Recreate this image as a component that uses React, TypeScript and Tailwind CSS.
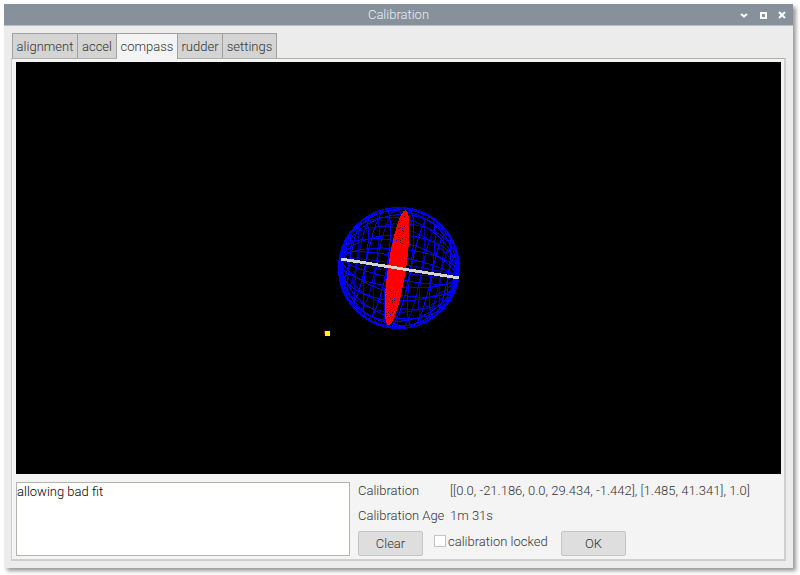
import { useState } from "react";

const TABS = ["alignment", "accel", "compass", "rudder", "settings"];

type Vec = [number, number, number];

const RADIUS = 60;
const TILT = 0.19;
const ROLL = 0.165;

// Rotates a point whose x axis is the poles' axis, then drops the depth.
function project([x, y, z]: Vec): string {
  const px = x * Math.cos(TILT) + z * Math.sin(TILT);
  const sx = px * Math.cos(ROLL) - y * Math.sin(ROLL);
  const sy = px * Math.sin(ROLL) + y * Math.cos(ROLL);
  return `${(sx * RADIUS).toFixed(1)},${(sy * RADIUS).toFixed(1)}`;
}

const range = (n: number) => Array.from({ length: n }, (_, i) => i);

const parallels = range(15).map((i) => {
  const a = ((i + 1) * Math.PI) / 16;
  return range(49)
    .map((k) => {
      const b = (k * Math.PI) / 24;
      return project([Math.cos(a), Math.sin(a) * Math.cos(b), Math.sin(a) * Math.sin(b)]);
    })
    .join(" ");
});

const meridians = range(24).map((i) => {
  const b = (i * Math.PI) / 12 + 0.07;
  return range(25)
    .map((k) => {
      const a = (k * Math.PI) / 24;
      return project([Math.cos(a), Math.sin(a) * Math.cos(b), Math.sin(a) * Math.sin(b)]);
    })
    .join(" ");
});

// Specks of the wire mesh that show through the two ends of the disc.
const specks = range(60).map((i) => {
  const end = i % 2 ? 1 : -1;
  const y = end * (22 + ((i * 17) % 31));
  const x = -7 + ((i * 7) % 8);
  return { x, y };
});

function Plot() {
  return (
    <svg
      className="block h-full w-full"
      viewBox="-383 -206 765 412"
      preserveAspectRatio="xMidYMid slice"
      role="img"
      aria-label="Compass fit"
      shapeRendering="crispEdges"
    >
      <g fill="none" stroke="#0000ff" strokeWidth="1">
        {parallels.map((p, i) => (
          <polyline key={`p${i}`} points={p} strokeOpacity={i % 2 ? 1 : 0.7} />
        ))}
        {meridians.map((p, i) => (
          <polyline key={`m${i}`} points={p} strokeOpacity={i % 3 ? 0.95 : 0.65} />
        ))}
        <circle r="60.5" strokeOpacity="0.85" />
        <path d="M-59-12Q-64 10-51 32M-58-10Q-61 8-51 28M-57-9Q-58 8-49 30M-59-8Q-55-29-41-44M-60-5Q-57-28-43-43" />
      </g>
      <g transform="rotate(8.5)">
        <ellipse cx="-2" cy="0" rx="9" ry="58" fill="#ff0000" />
        {specks.map((s, i) => (
          <rect key={i} x={s.x} y={s.y} width="1" height="1" fill={i % 3 ? "#500000" : "#2000e8"} />
        ))}
      </g>
      <path d="M-58-9L60 10" stroke="#d3d3d3" strokeWidth="3" />
      <rect x="-75" y="63" width="1" height="3" fill="#a00020" />
      <rect x="-74" y="63" width="5" height="5" fill="#ffff00" />
    </svg>
  );
}

export default function App() {
  const [tab, setTab] = useState("compass");
  return (
    <div className="min-h-screen bg-white pt-1 pr-[7px] pb-[7px] pl-1 font-['Roboto','Liberation_Sans',sans-serif] text-[13px] leading-[17px] font-light text-[#333]">
      <main className="flex min-h-[564px] flex-col bg-[#ececec] shadow-[3px_3px_4px_rgba(0,0,0,0.4)]">
        <header className="flex h-[22px] items-center border-b border-[#b8bec4] bg-[#87919b] text-[#eceef0]">
          <span className="w-16" />
          <h1 className="flex-1 text-center">Calibration</h1>
          <div className="flex w-16 justify-end gap-[7px] pr-[5px]">
            <button aria-label="Minimize" className="flex h-4 w-3 items-center justify-center">
              <svg width="8" height="8" viewBox="0 0 8 8" fill="none" stroke="#fff" strokeWidth="2">
                <path d="M1 3L4 5.5L7 3" />
              </svg>
            </button>
            <button aria-label="Maximize" className="flex h-4 w-3 items-center justify-center">
              <svg width="8" height="8" viewBox="0 0 8 8" fill="none" stroke="#fff" strokeWidth="2">
                <path d="M2 2H7V7H2Z" />
              </svg>
            </button>
            <button aria-label="Close" className="flex h-4 w-3 items-center justify-center">
              <svg width="8" height="8" viewBox="0 0 8 8" fill="none" stroke="#fff" strokeWidth="2">
                <path d="M1 1L7 7M7 1L1 7" />
              </svg>
            </button>
          </div>
        </header>

        <div className="flex flex-1 flex-col px-[7px] pt-[7px] pb-[7px]">
          <div role="tablist" className="grid grid-cols-[66px_39px_61px_45px_54px] pl-px">
            {TABS.map((t) => (
              <button
                key={t}
                role="tab"
                aria-selected={t === tab}
                onClick={() => setTab(t)}
                className={
                  t === tab
                    ? "z-10 -mb-px h-[26px] border-t border-r border-[#a0a0a0] bg-[#f4f4f4] pb-px whitespace-nowrap"
                    : "h-[25px] border-t border-r border-[#a0a0a0] bg-[#d4d4d4] whitespace-nowrap first:border-l"
                }
              >
                {t}
              </button>
            ))}
          </div>

          <section className="flex flex-1 flex-col gap-2 border border-t-[#b0b0a8] border-r-2 border-b-2 border-[#cfcfcf] bg-[#f4f4f4] py-[3px] pr-[3px] pl-1">
            <div className="h-[412px] bg-black">
              <Plot />
            </div>
            <div className="flex flex-1 gap-2">
              <textarea
                aria-label="Messages"
                defaultValue="allowing bad fit"
                className="h-[74px] w-[334px] shrink-0 resize-none border border-[#b4b4ac] bg-white text-black outline-none"
              />
              <div className="flex flex-1 flex-col gap-[7px]">
                <dl className="grid grid-cols-[84px_1fr] gap-x-2 gap-y-2 whitespace-nowrap">
                  <dt>Calibration</dt>
                  <dd>[[0.0, -21.186, 0.0, 29.434, -1.442], [1.485, 41.341], 1.0]</dd>
                  <dt>Calibration Age</dt>
                  <dd>1m 31s</dd>
                </dl>
                <div className="flex gap-[11px]">
                  <button className="h-[25px] w-[65px] rounded-xs border border-[#c4c4c4] bg-[#dedede]">Clear</button>
                  <label className="flex h-5 w-[116px] items-center gap-0.5 whitespace-nowrap">
                    <input type="checkbox" className="size-3 shrink-0 appearance-none border border-[#c4c4c4] bg-white checked:bg-[#87919b]" />
                    calibration locked
                  </label>
                  <button className="h-[25px] w-[65px] rounded-xs border border-[#c4c4c4] bg-[#dedede]">OK</button>
                </div>
              </div>
            </div>
          </section>
        </div>
      </main>
    </div>
  );
}
